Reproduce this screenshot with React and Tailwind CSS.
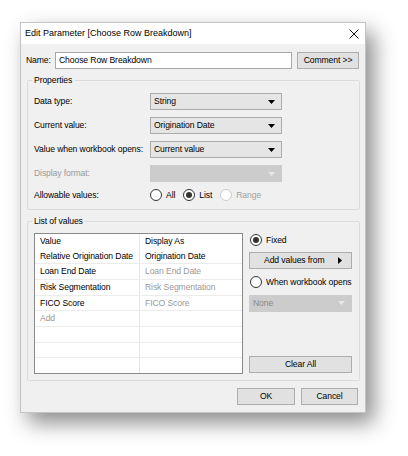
import React from 'react';

const Caret = ({ color = '#000' }) => (
  <svg width="7" height="4" viewBox="0 0 7 4">
    <polygon points="0,0 7,0 3.5,4" fill={color} />
  </svg>
);

const Select = ({ value, disabled, className = '' }) => (
  <div
    className={`flex items-center justify-between h-[17px] pl-[3px] pr-[6px] border ${
      disabled ? 'bg-[#cccccc] border-[#cccccc] text-[#8a8a8a]' : 'bg-[#e5e5e5] border-[#acacac]'
    } ${className}`}
  >
    <span>{value}</span>
    <Caret color={disabled ? '#e8e8e8' : '#000'} />
  </div>
);

const Radio = ({ checked, disabled, label }) => (
  <div className="flex items-center gap-[4px]">
    <span
      className={`w-[12px] h-[12px] shrink-0 rounded-full border bg-white flex items-center justify-center ${
        disabled ? 'border-[#cccccc]' : 'border-[#333333]'
      }`}
    >
      {checked && <span className="w-[6px] h-[6px] rounded-full bg-[#333333]" />}
    </span>
    <span className={disabled ? 'text-[#a0a0a0]' : ''}>{label}</span>
  </div>
);

const Button = ({ children, className = '' }) => (
  <div className={`h-[17px] flex items-center justify-center bg-[#e1e1e1] border border-[#adadad] ${className}`}>
    {children}
  </div>
);

const Group = ({ title, className = '', children }) => (
  <div className={`relative border border-[#dcdcdc] rounded-[2px] ${className}`}>
    {/* legend sits on the top border */}
    <span className="absolute -top-[7px] left-[4px] px-[2px] bg-[#f0f0f0] leading-[12px]">{title}</span>
    {children}
  </div>
);

const rows = [
  { value: 'Value', display: 'Display As', dim: false },
  { value: 'Relative Origination Date', display: 'Origination Date', dim: false },
  { value: 'Loan End Date', display: 'Loan End Date', dim: true },
  { value: 'Risk Segmentation', display: 'Risk Segmentation', dim: true },
  { value: 'FICO Score', display: 'FICO Score', dim: true },
  { value: 'Add', display: '', dim: true, add: true },
  { value: '', display: '' },
  { value: '', display: '' },
  { value: '', display: '' },
];

export default function App() {
  return (
    <div
      className="w-[408px] h-[456px] bg-white pt-[22px] pl-[20px] text-[8.6px] tracking-[-0.1px] text-black whitespace-nowrap"
      style={{ fontFamily: '"Liberation Sans", Arial, sans-serif' }}
    >
      <div className="w-[346px] h-[391px] bg-[#f0f0f0] border border-[#c4c4c4] shadow-[8px_10px_20px_rgba(0,0,0,0.45)] flex flex-col">
        {/* Title bar */}
        <div className="h-[21px] bg-white flex items-center justify-between pl-[4px] pr-[6px]">
          <span className="text-[9px] tracking-normal">Edit Parameter [Choose Row Breakdown]</span>
          <svg width="10" height="10" viewBox="0 0 10 10">
            <path d="M0.5 0.5 L9.5 9.5 M9.5 0.5 L0.5 9.5" stroke="#111" strokeWidth="1" />
          </svg>
        </div>

        <div className="flex flex-col px-[5px]">
          {/* Name */}
          <div className="flex items-center mt-[8px] h-[17px]">
            <span className="w-[29px]">Name:</span>
            <div className="w-[237px] h-[17px] bg-white border border-[#a8a8a8] flex items-center pl-[3px]">
              Choose Row Breakdown
            </div>
            <Button className="ml-[5px] w-[62px]">Comment &gt;&gt;</Button>
          </div>

          {/* Properties */}
          <Group title="Properties" className="mt-[11px] ml-[1px] w-[333px] h-[130px] pt-[12px] pl-[6px]">
            <div className="flex flex-col gap-[7px]">
              <div className="flex items-center h-[17px]">
                <span className="w-[116px]">Data type:</span>
                <Select value="String" className="w-[132px]" />
              </div>
              <div className="flex items-center h-[17px]">
                <span className="w-[116px]">Current value:</span>
                <Select value="Origination Date" className="w-[132px]" />
              </div>
              <div className="flex items-center h-[17px]">
                <span className="w-[116px]">Value when workbook opens:</span>
                <Select value="Current value" className="w-[132px]" />
              </div>
              <div className="flex items-center h-[17px]">
                <span className="w-[116px] text-[#9a9a9a]">Display format:</span>
                <Select value="" disabled className="w-[132px]" />
              </div>
              <div className="flex items-center h-[13px]">
                <span className="w-[116px]">Allowable values:</span>
                <div className="flex items-center gap-[8px]">
                  <Radio label="All" />
                  <Radio label="List" checked />
                  <Radio label="Range" disabled />
                </div>
              </div>
            </div>
          </Group>

          {/* List of values */}
          <Group title="List of values" className="mt-[11px] ml-[1px] w-[333px] h-[160px] pt-[11px] pl-[6px] flex">
            <div className="w-[209px] h-[141px] bg-white border border-[#8a8a8a] flex flex-col">
              {rows.map((r, i) => (
                <div
                  key={i}
                  className={`flex flex-1 ${i >= 2 ? 'border-t border-[#ececec]' : ''}`}
                >
                  <div
                    className={`w-[105px] border-r border-[#e6e6e6] flex items-center pl-[5px] ${
                      r.add ? 'text-[#9a9a9a]' : ''
                    }`}
                  >
                    {r.value}
                  </div>
                  <div className={`flex-1 flex items-center pl-[5px] ${r.dim ? 'text-[#9a9a9a]' : ''}`}>
                    {r.display}
                  </div>
                </div>
              ))}
            </div>

            <div className="ml-[6px] w-[103px] h-[141px] flex flex-col">
              <div className="mt-[1px] ml-[1px]">
                <Radio label="Fixed" checked />
              </div>
              <div className="mt-[5px] h-[17px] flex items-center justify-between pl-[14px] pr-[9px] bg-[#e1e1e1] border border-[#adadad]">
                <span>Add values from</span>
                <svg width="4" height="7" viewBox="0 0 4 7">
                  <polygon points="0,0 4,3.5 0,7" fill="#000" />
                </svg>
              </div>
              <div className="mt-[7px] ml-[1px]">
                <Radio label="When workbook opens" />
              </div>
              <Select value="None" disabled className="mt-[6px]" />
              <Button className="mt-auto mb-[1px]">Clear All</Button>
            </div>
          </Group>

          {/* Footer */}
          <div className="flex justify-end gap-[6px] mt-[7px] pr-[2px]">
            <Button className="w-[58px] border-[#0078d7]">OK</Button>
            <Button className="w-[57px]">Cancel</Button>
          </div>
        </div>
      </div>
    </div>
  );
}
